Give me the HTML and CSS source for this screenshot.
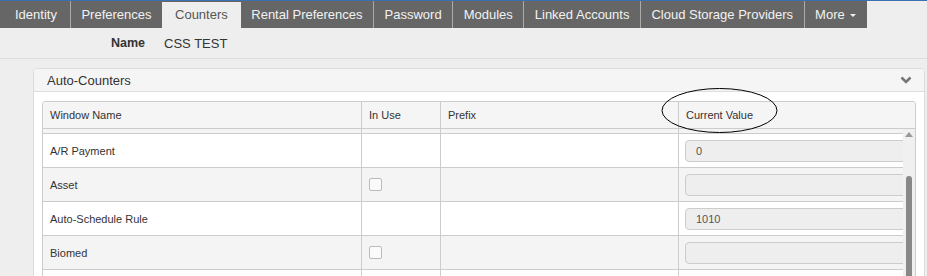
FILE: index.html
```html
<!DOCTYPE html>
<html lang="en">
<head>
    <meta charset="UTF-8">
    <meta name="viewport" content="width=device-width, initial-scale=1.0">
    <title>Counters</title>
    <link rel="stylesheet" href="styles.css">
</head>
<body>
    <div class="topline"></div>
    <div class="tabs">
        <div class="tab">Identity</div>
        <div class="tab">Preferences</div>
        <div class="tab active">Counters</div>
        <div class="tab">Rental Preferences</div>
        <div class="tab">Password</div>
        <div class="tab">Modules</div>
        <div class="tab">Linked Accounts</div>
        <div class="tab">Cloud Storage Providers</div>
        <div class="tab">More <span class="caret"></span></div>
    </div>

    <div class="name-row">
        <span class="label">Name</span>
        <span>CSS TEST</span>
    </div>

    <div class="content">
        <div class="panel">
            <div class="panel-head">
                <span>Auto-Counters</span>
                <svg class="chevron" width="12" height="8" viewBox="0 0 12 8">
                    <polyline points="1.5,1.5 6,6 10.5,1.5" fill="none" stroke="#777" stroke-width="2.6"/>
                </svg>
            </div>
            <div class="panel-body">
                <div class="grid">
                    <div class="grid-head">
                        <div class="cell">Window Name</div>
                        <div class="cell">In Use</div>
                        <div class="cell">Prefix</div>
                        <div class="cell">Current Value</div>
                    </div>
                    <div class="grid-body">
                        <div class="rows">
                            <div class="row peek">
                                <div class="cell"></div><div class="cell"></div><div class="cell"></div><div class="cell"></div>
                            </div>
                            <div class="row">
                                <div class="cell">A/R Payment</div>
                                <div class="cell"></div>
                                <div class="cell"></div>
                                <div class="cell"><div class="value">0</div></div>
                            </div>
                            <div class="row alt">
                                <div class="cell">Asset</div>
                                <div class="cell"><span class="check"></span></div>
                                <div class="cell"></div>
                                <div class="cell"><div class="value"></div></div>
                            </div>
                            <div class="row">
                                <div class="cell">Auto-Schedule Rule</div>
                                <div class="cell"></div>
                                <div class="cell"></div>
                                <div class="cell"><div class="value">1010</div></div>
                            </div>
                            <div class="row alt">
                                <div class="cell">Biomed</div>
                                <div class="cell"><span class="check"></span></div>
                                <div class="cell"></div>
                                <div class="cell"><div class="value"></div></div>
                            </div>
                            <div class="row">
                                <div class="cell"></div>
                                <div class="cell"></div>
                                <div class="cell"></div>
                                <div class="cell"><div class="value"></div></div>
                            </div>
                        </div>
                        <div class="scrollbar">
                            <span class="arrow-up"></span>
                            <span class="thumb"></span>
                        </div>
                    </div>
                </div>
            </div>
        </div>
    </div>

    <!-- annotation drawn over the header -->
    <svg class="mark" width="118" height="46" viewBox="0 0 118 46">
        <ellipse cx="58.5" cy="22.5" rx="57.5" ry="22" fill="none" stroke="#000" stroke-width="1"/>
    </svg>
</body>
</html>
```

FILE: styles.css
```css
body {
    margin: 0;
    background-color: #eeeeee;
    font-family: 'Liberation Sans', Arial, sans-serif;
    color: #333;
    height: 276px;
    overflow: hidden;
    position: relative;
}
.topline {
    height: 1px;
    background-color: #3c6eb4;
}
.tabs {
    display: inline-flex;
    background-color: #666;
    height: 27px;
}
.tab {
    padding: 0 10.5px;
    line-height: 27px;
    font-size: 13px;
    color: #f2f2f2;
    border-left: 1px solid #aaa;
    white-space: nowrap;
}
.tab:first-child {
    border-left: none;
    padding: 0 13px 0 15px;
}
.tab.active {
    background-color: #eeeeee;
    color: #555;
    border-left: none;
    margin-top: 1px;
    line-height: 26px;
    padding: 0 13px;
}
.tab.active + .tab {
    border-left: none;
}
.caret {
    display: inline-block;
    width: 0;
    height: 0;
    margin-left: 2px;
    vertical-align: middle;
    border-top: 3px solid #f2f2f2;
    border-left: 3px solid transparent;
    border-right: 3px solid transparent;
}
.name-row {
    display: flex;
    align-items: center;
    gap: 19px;
    height: 30px;
    padding-left: 111px;
    font-size: 13px;
    border-bottom: 1px solid #dcdcdc;
}
.name-row .label {
    font-weight: bold;
    font-size: 12.5px;
}
.content {
    padding: 9px 2px 0 33px;
}
.panel {
    background: #fff;
    border: 1px solid #ddd;
    border-radius: 4px;
}
.panel-head {
    display: flex;
    align-items: center;
    justify-content: space-between;
    height: 22px;
    padding: 0 12px 0 13px;
    background-color: #f5f5f5;
    border-bottom: 1px solid #ddd;
    border-radius: 4px 4px 0 0;
    font-size: 13px;
    color: #333;
}
.panel-body {
    padding: 9px 8px 0 8px;
}
.grid {
    border: 1px solid #ccc;
    border-radius: 3px 3px 0 0;
    overflow: hidden;
    font-size: 11px;
    color: #333;
}
.grid-head {
    display: grid;
    grid-template-columns: 319px 79px 238px 1fr;
    height: 26px;
    background-color: #f5f5f5;
    border-bottom: 1px solid #ccc;
}
.grid-head .cell {
    display: flex;
    align-items: center;
    padding: 0 7px;
    border-right: 1px solid #ccc;
}
.grid-head .cell:last-child {
    border-right: none;
}
.grid-body {
    display: flex;
}
.rows {
    flex: 1;
    overflow: hidden;
}
.row {
    display: grid;
    grid-template-columns: 319px 79px 238px 1fr;
    height: 33px;
    border-bottom: 1px solid #ccc;
    background: #fff;
}
.row.alt,
.row.peek {
    background-color: #f4f4f4;
}
.row.peek {
    height: 4px;
}
.row .cell {
    display: flex;
    align-items: center;
    padding: 0 7px;
    border-right: 1px solid #ccc;
    overflow: hidden;
    white-space: nowrap;
}
.row .cell:last-child {
    border-right: none;
    padding: 0 0 0 6px;
}
.check {
    width: 11px;
    height: 11px;
    border: 1px solid #bbb;
    border-radius: 2px;
    background: #fafafa;
}
.value {
    flex: none;
    width: 240px;
    height: 20px;
    line-height: 20px;
    padding-left: 10px;
    background-color: #eee;
    border: 1px solid #ccc;
    border-radius: 4px;
    color: #555;
    font-size: 11px;
}
.scrollbar {
    position: relative;
    width: 12px;
    background-color: #f0f0f0;
}
.arrow-up {
    position: absolute;
    top: 3px;
    left: 2px;
    width: 0;
    height: 0;
    border-bottom: 5px solid #999;
    border-left: 4px solid transparent;
    border-right: 4px solid transparent;
}
.thumb {
    position: absolute;
    top: 47px;
    left: 3px;
    width: 6px;
    height: 200px;
    background-color: #888;
    border-radius: 3px;
}
.mark {
    position: absolute;
    left: 661px;
    top: 88px;
}
```
